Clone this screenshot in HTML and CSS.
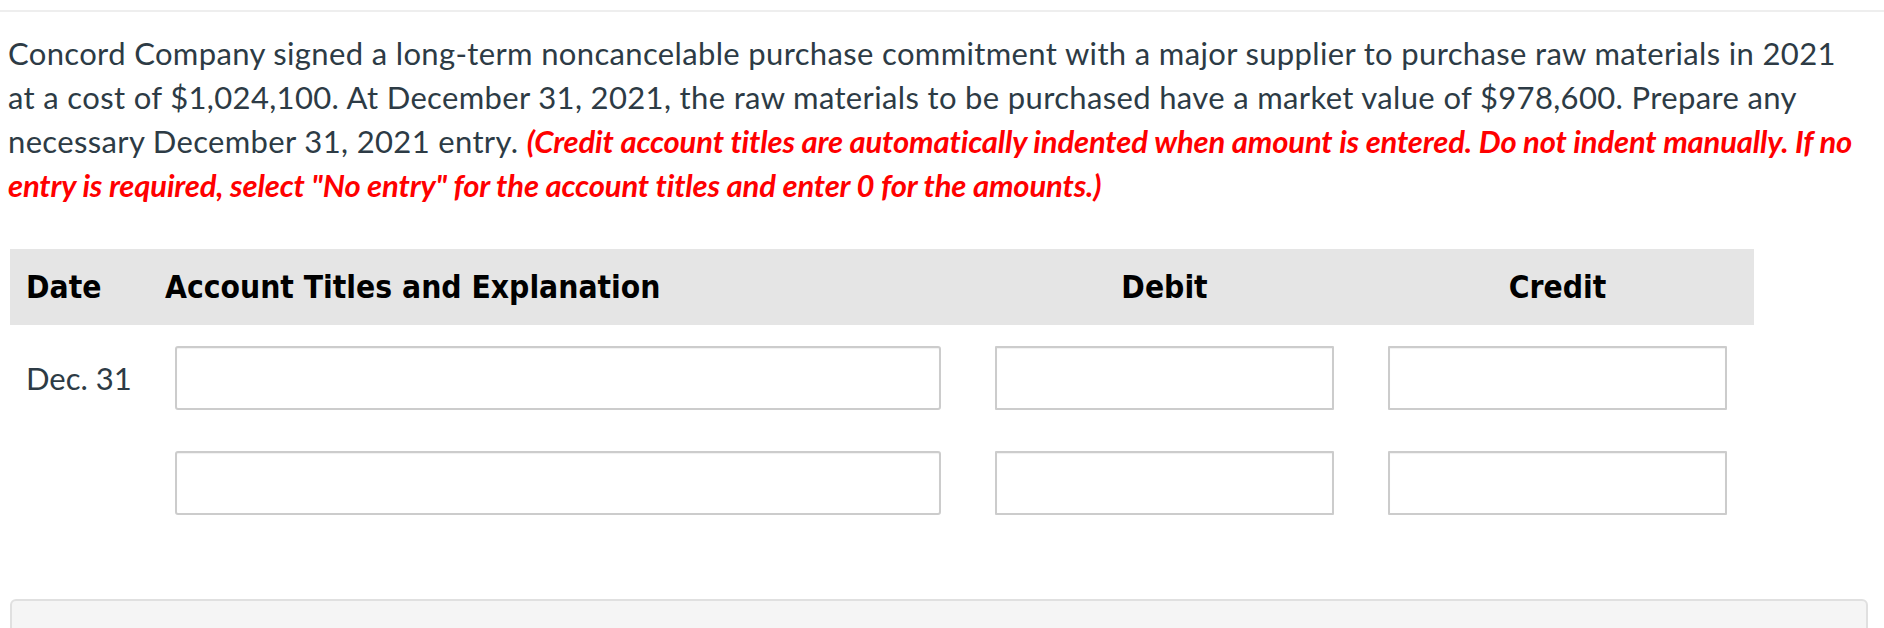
FILE: index.html
```html
<!DOCTYPE html>
<html>
<head>
<meta charset="utf-8">
<link rel="stylesheet" href="styles.css">
</head>
<body>
<div class="topline"></div>
<div class="page">
  <p class="question">Concord Company signed a long-term noncancelable purchase commitment with a major supplier to purchase raw materials in 2021 at a cost of $1,024,100. At December 31, 2021, the raw materials to be purchased have a market value of $978,600. Prepare any necessary December 31, 2021 entry. <em class="note">(Credit account titles are automatically indented when amount is entered. Do not indent manually. If no entry is required, select "No entry" for the account titles and enter 0 for the amounts.)</em></p>

  <div class="journal">
    <div class="head">
      <div class="h-date">Date</div>
      <div class="h-acct">Account Titles and Explanation</div>
      <div class="h-amt">Debit</div>
      <div class="h-amt">Credit</div>
    </div>
    <div class="row">
      <div class="c-date">Dec. 31</div>
      <div class="c-acct"><input class="box acct" type="text"></div>
      <div class="c-amt"><input class="box amt" type="text"></div>
      <div class="c-amt"><input class="box amt" type="text"></div>
    </div>
    <div class="row">
      <div class="c-date"></div>
      <div class="c-acct"><input class="box acct" type="text"></div>
      <div class="c-amt"><input class="box amt" type="text"></div>
      <div class="c-amt"><input class="box amt" type="text"></div>
    </div>
  </div>

  <div class="panel"></div>
</div>
</body>
</html>
```

FILE: styles.css
```css
html, body {
  margin: 0;
  padding: 0;
  background: #ffffff;
  overflow: hidden;
}
body {
  width: 1884px;
  height: 628px;
  font-family: Lato, "Open Sans", sans-serif;
  color: #2d3b45;
}
.topline {
  margin-top: 10px;
  height: 2px;
  background: #eeeeee;
}
.page {
  padding: 0 16px 0 10px;
}
.question {
  margin: 19px 8px 0 -2px;
  font-size: 31px;
  line-height: 44px;
  letter-spacing: 0.35px;
  font-variant-ligatures: none;
}
.note {
  color: #ff0000;
  font-weight: 700;
  font-style: italic;
  letter-spacing: -0.15px;
  font-variant-ligatures: none;
}
.journal {
  margin-top: 42px;
  width: 1744px;
}
.head, .row {
  display: grid;
  grid-template-columns: 155px 803px 393px 393px;
  align-items: center;
}
.head {
  height: 76px;
  background: #e5e5e5;
  font-family: "DejaVu Sans Condensed", "DejaVu Sans", sans-serif;
  font-stretch: condensed;
  font-weight: 700;
  font-size: 31.5px;
  color: #000000;
}
.h-date {
  padding-left: 16px;
}
.h-amt {
  text-align: center;
}
.row {
  margin-top: 21px;
}
.row + .row {
  margin-top: 41px;
}
.c-date {
  padding-left: 16px;
  font-size: 31px;
}
.c-acct {
  padding-left: 10px;
}
.c-amt {
  display: flex;
  justify-content: center;
}
.box {
  display: block;
  box-sizing: border-box;
  height: 64px;
  margin: 0;
  border: 2px solid #cccccc;
  border-radius: 3px;
  background: #ffffff;
  box-shadow: inset 0 1px 1px rgba(0, 0, 0, 0.06);
}
.acct {
  width: 766px;
}
.amt {
  width: 339px;
  border-radius: 1px;
}
.panel {
  margin-top: 84px;
  width: 1858px;
  height: 60px;
  box-sizing: border-box;
  background: #f5f5f5;
  border: 2px solid #e0e0e0;
  border-radius: 6px;
}
```
